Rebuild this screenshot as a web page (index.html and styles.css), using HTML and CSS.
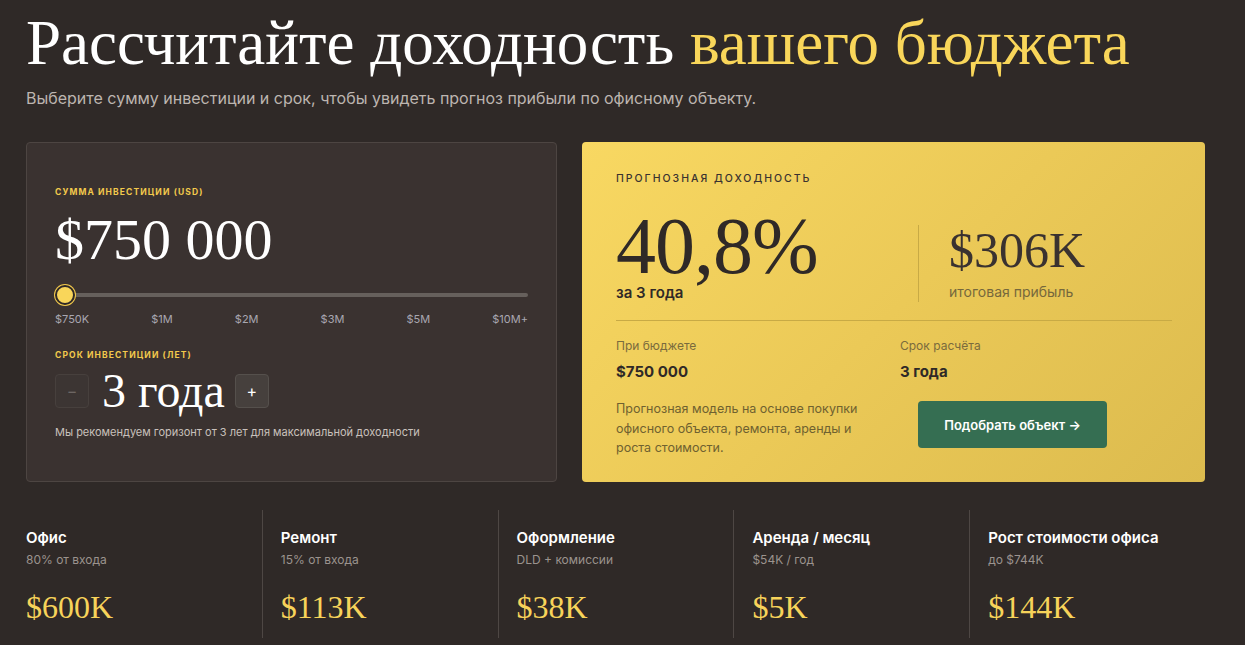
FILE: index.html
```html
<!DOCTYPE html>
<html lang="ru">

<head>
    <meta charset="UTF-8" />
    <meta name="viewport" content="width=device-width, initial-scale=1.0" />
    <title>Калькулятор доходности</title>
    <link rel="stylesheet" href="styles.css">
</head>

<body>
    <div class="page">
        <h1 class="page-title">Рассчитайте доходность <span class="accent">вашего бюджета</span></h1>
        <p class="page-sub">Выберите сумму инвестиции и срок, чтобы увидеть прогноз прибыли по офисному объекту.</p>

        <div class="calc">
            <!-- Inputs -->
            <div class="calc-input">
                <div class="field-label">Сумма инвестиции (USD)</div>
                <div class="amount">$750 000</div>

                <div class="slider">
                    <div class="slider-track"></div>
                    <div class="slider-thumb"></div>
                </div>
                <div class="slider-ticks">
                    <span>$750K</span>
                    <span>$1M</span>
                    <span>$2M</span>
                    <span>$3M</span>
                    <span>$5M</span>
                    <span>$10M+</span>
                </div>

                <div class="field-label term-label">Срок инвестиции (лет)</div>
                <div class="stepper">
                    <button class="step-btn disabled">−</button>
                    <span class="term">3 года</span>
                    <button class="step-btn">+</button>
                </div>
                <p class="hint">Мы рекомендуем горизонт от 3 лет для максимальной доходности</p>
            </div>

            <!-- Result -->
            <div class="calc-result">
                <div class="result-label">Прогнозная доходность</div>
                <div class="result-top">
                    <div class="result-main">
                        <div class="percent">40,8%</div>
                        <div class="percent-sub">за 3 года</div>
                    </div>
                    <div class="result-profit">
                        <div class="profit">$306K</div>
                        <div class="profit-sub">итоговая прибыль</div>
                    </div>
                </div>
                <div class="result-grid">
                    <div>
                        <div class="meta-label">При бюджете</div>
                        <div class="meta-value">$750 000</div>
                    </div>
                    <div>
                        <div class="meta-label">Срок расчёта</div>
                        <div class="meta-value">3 года</div>
                    </div>
                    <p class="result-note">Прогнозная модель на основе покупки офисного объекта, ремонта, аренды и роста стоимости.</p>
                    <div class="result-action">
                        <button class="pick-btn">Подобрать объект →</button>
                    </div>
                </div>
            </div>
        </div>

        <div class="stats" id="stats"></div>
    </div>

    <script>
        const stats = [
            { title: "Офис", sub: "80% от входа", value: "$600K" },
            { title: "Ремонт", sub: "15% от входа", value: "$113K" },
            { title: "Оформление", sub: "DLD + комиссии", value: "$38K" },
            { title: "Аренда / месяц", sub: "$54K / год", value: "$5K" },
            { title: "Рост стоимости офиса", sub: "до $744K", value: "$144K" },
        ];

        const statsEl = document.getElementById("stats");
        stats.forEach(item => {
            const col = document.createElement("div");
            col.className = "stat";
            col.innerHTML = `
                <div class="stat-title">${item.title}</div>
                <div class="stat-sub">${item.sub}</div>
                <div class="stat-value">${item.value}</div>
            `;
            statsEl.appendChild(col);
        });
    </script>
</body>

</html>
```

FILE: styles.css
```css
* {
    box-sizing: border-box;
    margin: 0;
    padding: 0;
}

body {
    font-family: Inter, 'Noto Sans', sans-serif;
    background: #2f2927;
    color: #fff;
    overflow: hidden;
}

.page {
    width: 1179px;
    margin-left: 26px;
    padding-top: 11px;
}

.page-title {
    font-family: 'Liberation Serif', serif;
    font-weight: 400;
    font-size: 63px;
    line-height: 64px;
    color: #fff;
}

.page-title .accent {
    color: #f9d65a;
}

.page-sub {
    margin-top: 13px;
    font-size: 16px;
    color: #bdb5b0;
}

.calc {
    display: grid;
    grid-template-columns: 531px 623px;
    gap: 25px;
    margin-top: 34px;
}

.calc-input {
    background: #3a3230;
    border: 1px solid #4d4542;
    border-radius: 4px;
    padding: 44px 28px 40px 28px;
    height: 340px;
}

.field-label {
    font-size: 8.5px;
    font-weight: 700;
    letter-spacing: 1.1px;
    text-transform: uppercase;
    color: #f2c94c;
}

.amount {
    font-family: 'Liberation Serif', serif;
    font-size: 58px;
    line-height: 60px;
    margin-top: 13px;
    color: #fff;
}

.slider {
    position: relative;
    margin-top: 15px;
    height: 20px;
}

.slider-track {
    position: absolute;
    left: 0;
    right: 0;
    top: 8px;
    height: 4px;
    border-radius: 2px;
    background: #66605c;
}

.slider-thumb {
    position: absolute;
    left: 0;
    top: 0;
    width: 20px;
    height: 20px;
    border-radius: 50%;
    background: #f9d65a;
    border: 2px solid #2f2927;
    box-shadow: 0 0 0 1px #f2c94c;
}

.slider-ticks {
    display: flex;
    justify-content: space-between;
    margin-top: 7px;
    font-size: 11px;
    color: #a9a7b0;
}

.term-label {
    margin-top: 24px;
}

.stepper {
    display: flex;
    align-items: center;
    margin-top: 11px;
}

.step-btn {
    width: 34px;
    height: 34px;
    border: 1px solid #55504c;
    border-radius: 4px;
    background: #46403d;
    color: #fff;
    font-size: 16px;
    font-family: Inter, sans-serif;
}

.step-btn.disabled {
    background: #3c3533;
    border-color: #47403d;
    color: #6d6663;
}

.term {
    font-family: 'Liberation Serif', serif;
    font-size: 48px;
    line-height: 40px;
    margin: 0 10px 0 13px;
    color: #fff;
}

.hint {
    margin-top: 14px;
    font-size: 11px;
    color: #c9c1bc;
}

.calc-result {
    background: linear-gradient(135deg, #f8d862 0%, #ebc957 50%, #dcbb4e 100%);
    border-radius: 4px;
    padding: 30px 33px 30px 34px;
    color: #2f2927;
    height: 340px;
}

.result-label {
    font-size: 10.5px;
    font-weight: 500;
    letter-spacing: 2px;
    text-transform: uppercase;
    color: #3a3230;
}

.result-top {
    display: grid;
    grid-template-columns: 302px 1fr;
    margin-top: 16px;
    padding-bottom: 18px;
    border-bottom: 1px solid #c8aa45;
}

.percent {
    font-family: 'Liberation Serif', serif;
    font-size: 80px;
    line-height: 74px;
    letter-spacing: -1px;
    margin-top: 8px;
    color: #2f2927;
}

.percent-sub {
    font-size: 15px;
    font-weight: 600;
    color: #2f2927;
}

.result-profit {
    border-left: 1px solid #c8aa45;
    padding-left: 30px;
    margin-top: 24px;
    padding-top: 2px;
}

.profit {
    font-family: 'Liberation Serif', serif;
    font-size: 50px;
    line-height: 46px;
    color: #3a3230;
}

.profit-sub {
    margin-top: 10px;
    font-size: 14px;
    color: #76683c;
}

.result-grid {
    display: grid;
    grid-template-columns: 284px 1fr;
    row-gap: 20px;
    margin-top: 17px;
}

.meta-label {
    font-size: 12px;
    color: #7a6b3d;
}

.meta-value {
    margin-top: 9px;
    font-size: 15px;
    font-weight: 700;
    color: #2f2927;
}

.result-note {
    font-size: 12.5px;
    line-height: 19.5px;
    color: #6f6130;
    padding-right: 20px;
    margin-top: -2px;
}

.result-action {
    padding-left: 18px;
}

.pick-btn {
    width: 189px;
    height: 47px;
    border: none;
    border-radius: 4px;
    background: #356e52;
    color: #fff;
    font-family: Inter, sans-serif;
    font-size: 13px;
    font-weight: 600;
}

.stats {
    display: grid;
    grid-template-columns: repeat(5, 1fr);
    margin-top: 28px;
}

.stat {
    height: 128px;
    padding: 18px 0 0 18px;
    border-left: 1px solid #4e4744;
}

.stat:first-child {
    border-left: none;
    padding-left: 0;
}

.stat-title {
    font-size: 15px;
    font-weight: 600;
    color: #fff;
}

.stat-sub {
    margin-top: 5px;
    font-size: 12px;
    color: #9b938e;
}

.stat-value {
    margin-top: 22px;
    font-family: 'Liberation Serif', serif;
    font-size: 32px;
    color: #f7d35a;
}
```
